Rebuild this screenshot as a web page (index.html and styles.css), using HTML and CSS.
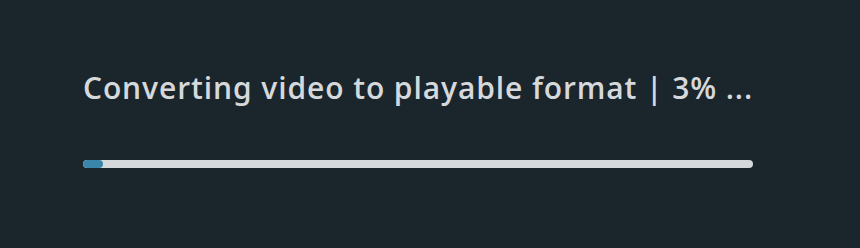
FILE: index.html
```html
<!DOCTYPE html>
<html>
<head>
<meta charset="utf-8">
<link rel="stylesheet" href="styles.css">
</head>
<body>
<div class="wrap">
  <div class="status">
    <div class="label">Converting video to playable format | 3% ...</div>
    <div class="track"><div class="fill" style="width:3%"></div></div>
  </div>
</div>
</body>
</html>
```
FILE: styles.css
```css
html, body {
  margin: 0;
  padding: 0;
  background: #1b252c;
  height: 100%;
}
.wrap {
  padding: 67px 0 0 83px;
}
.status {
  width: 670px;
  display: flex;
  flex-direction: column;
}
.label {
  font-family: "Open Sans", sans-serif;
  font-weight: 600;
  font-size: 30px;
  line-height: 42px;
  letter-spacing: 0.9px;
  font-feature-settings: "salt" 1, "ss01" 1;
  color: #d5d9dc;
  white-space: nowrap;
  margin-bottom: 51px;
}
.track {
  height: 8px;
  background: #d5d9dc;
  border-radius: 4px;
  overflow: hidden;
}
.fill {
  height: 100%;
  background: #3a86aa;
  border-radius: 4px;
}
```
